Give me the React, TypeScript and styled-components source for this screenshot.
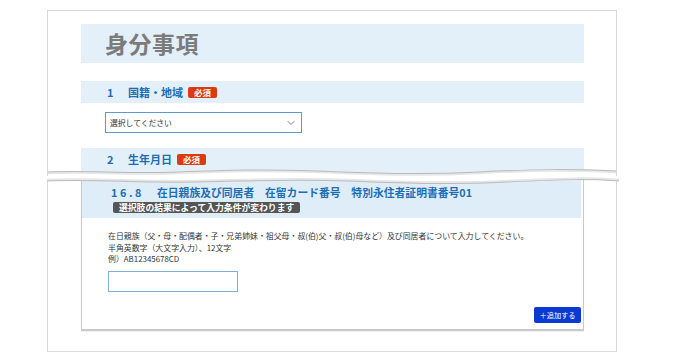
import styled, { createGlobalStyle } from 'styled-components'
import { ChevronDown } from 'lucide-react'

const GlobalStyle = createGlobalStyle`
  body {
    margin: 0;
    background: #fff;
    font-family: "Noto Sans CJK JP", "Noto Sans", sans-serif;
  }
`

const WAVE_TOP =
  'M0,6 C40,4 80,8 130,6 S210,3 270,5 S370,9 430,6 S520,3 570,5'
const WAVE_BOTTOM =
  'M0,5 C50,3 90,7 150,6 S240,3 300,5 S400,9 460,6 S540,3 570,5'

export default function App() {
  return (
    <>
      <GlobalStyle />
      <SPage>
        <STopSheet>
          <STitleBar>
            <STitle>身分事項</STitle>
          </STitleBar>
          <SSectionBar>
            <SNum>1</SNum>
            <SLabel>国籍・地域</SLabel>
            <SRequired>必須</SRequired>
          </SSectionBar>
          <SSelect>
            <span>選択してください</span>
            <ChevronDown size={12} strokeWidth={1.5} color="#555" />
          </SSelect>
          <SSectionBar $cut>
            <SNum>2</SNum>
            <SLabel>生年月日</SLabel>
            <SRequired>必須</SRequired>
          </SSectionBar>
          <STearBelow viewBox="0 0 570 10" preserveAspectRatio="none">
            <path d={`${WAVE_TOP} L570,10 L0,10 Z`} fill="#fff" />
            <path d={WAVE_TOP} fill="none" stroke="#e6e6e6" strokeWidth="2.5" transform="translate(0,1)" />
            <path d={WAVE_TOP} fill="none" stroke="#bcbcbc" strokeWidth="1" />
          </STearBelow>
        </STopSheet>

        <SBottomSheet>
          <STearAbove viewBox="0 0 570 10" preserveAspectRatio="none">
            <path d={`${WAVE_BOTTOM} L570,0 L0,0 Z`} fill="#fff" />
            <path d={WAVE_BOTTOM} fill="none" stroke="#e6e6e6" strokeWidth="2.5" transform="translate(0,-1)" />
            <path d={WAVE_BOTTOM} fill="none" stroke="#bcbcbc" strokeWidth="1" />
          </STearAbove>
          <SCard>
            <SCardHeader>
              <SCardTitle>
                <SCardNo>16.8</SCardNo>
                在日親族及び同居者　在留カード番号　特別永住者証明書番号01
              </SCardTitle>
              <SNotice>選択肢の結果によって入力条件が変わります</SNotice>
            </SCardHeader>
            <SCardBody>
              <SHelp>
                在日親族（父・母・配偶者・子・兄弟姉妹・祖父母・叔(伯)父・叔(伯)母など）及び同居者について入力してください。
                <br />
                半角英数字（大文字入力）、12文字
                <br />
                例）AB12345678CD
              </SHelp>
              <SInput type="text" />
              <SActions>
                <SAddButton>＋追加する</SAddButton>
              </SActions>
            </SCardBody>
          </SCard>
        </SBottomSheet>
      </SPage>
    </>
  )
}

const SPage = styled.div`
  width: 570px;
  padding: 10px 0 0 47px;
  display: flex;
  flex-direction: column;
`

const STopSheet = styled.div`
  position: relative;
  box-sizing: border-box;
  height: 166px;
  border: 1px solid #d9d9d9;
  border-bottom: none;
  padding: 13px 32px 0 33px;
  display: flex;
  flex-direction: column;
  overflow: hidden;
`

const STitleBar = styled.div`
  height: 39px;
  flex-shrink: 0;
  background: #e3eff9;
  display: flex;
  align-items: center;
  padding-left: 24px;
`

const STitle = styled.h1`
  margin: 0;
  font-size: 23px;
  line-height: 1;
  font-weight: 700;
  color: #7b7b7b;
  letter-spacing: 0.5px;
`

const SSectionBar = styled.div<{ $cut?: boolean }>`
  margin-top: ${({ $cut }) => ($cut ? 15 : 18)}px;
  height: 22px;
  flex-shrink: 0;
  background: #e3eff9;
  display: flex;
  align-items: center;
  padding-left: 26px;
  padding-bottom: ${({ $cut }) => ($cut ? 8 : 0)}px;
`

const SNum = styled.span`
  width: 21px;
  font-size: 11px;
  font-weight: 700;
  color: #1d6db4;
`

const SLabel = styled.span`
  font-size: 11px;
  font-weight: 700;
  color: #1d6db4;
  line-height: 1;
`

const SRequired = styled.span`
  margin-left: 5px;
  height: 11px;
  padding: 0 6px;
  border-radius: 2px;
  background: #dc3a12;
  color: #fff;
  font-size: 8.5px;
  font-weight: 700;
  line-height: 11px;
`

const SSelect = styled.div`
  margin: 9px 0 0 24px;
  width: 197px;
  height: 21px;
  flex-shrink: 0;
  box-sizing: border-box;
  border: 1px solid #5f98c9;
  display: flex;
  align-items: center;
  justify-content: space-between;
  padding: 0 4px 0 4px;
  font-size: 7.8px;
  color: #333;
`

const STearBelow = styled.svg`
  position: absolute;
  left: -1px;
  bottom: 0;
  width: 572px;
  height: 10px;
`

const SBottomSheet = styled.div`
  position: relative;
  border: 1px solid #d9d9d9;
  border-top: none;
  padding: 0 32px 20px 33px;
`

const STearAbove = styled.svg`
  position: absolute;
  z-index: 2;
  left: -1px;
  top: 0;
  width: 572px;
  height: 10px;
`

const SCard = styled.div`
  border: 1px solid #c9c9c9;
  border-bottom-width: 2px;
  border-top: none;
  box-shadow: 0 1px 1px rgba(0, 0, 0, 0.06);
  background: #fff;
`

const SCardHeader = styled.div`
  background: #deedf8;
  margin-right: 2px;
  padding: 9px 0 5px 29px;
  display: flex;
  flex-direction: column;
  align-items: flex-start;
`

const SCardTitle = styled.div`
  font-size: 10.8px;
  line-height: 14px;
  font-weight: 700;
  color: #1d6db4;
  white-space: nowrap;
`

const SCardNo = styled.span`
  letter-spacing: 2.6px;
  margin-right: 13px;
`

const SNotice = styled.span`
  margin: 3px 0 0 2px;
  height: 11px;
  padding: 0 6px;
  border-radius: 2px;
  background: #555;
  color: #fff;
  font-size: 8.8px;
  line-height: 11px;
  font-weight: 700;
`

const SCardBody = styled.div`
  padding: 12px 2px 6px 26px;
  display: flex;
  flex-direction: column;
  align-items: flex-start;
`

const SHelp = styled.p`
  margin: 0;
  font-size: 7.9px;
  line-height: 11.5px;
  color: #333;
  white-space: nowrap;
`

const SInput = styled.input`
  margin-top: 6px;
  width: 130px;
  height: 21px;
  box-sizing: border-box;
  border: 1px solid #80b0d2;
  border-radius: 0;
  outline: none;
`

const SActions = styled.div`
  align-self: stretch;
  margin-top: 15px;
  display: flex;
  justify-content: flex-end;
`

const SAddButton = styled.button`
  width: 47px;
  height: 16px;
  padding: 0;
  border: none;
  border-radius: 2px;
  background: #0b3ad3;
  color: #fff;
  font-family: inherit;
  font-size: 7.2px;
  line-height: 16px;
`
